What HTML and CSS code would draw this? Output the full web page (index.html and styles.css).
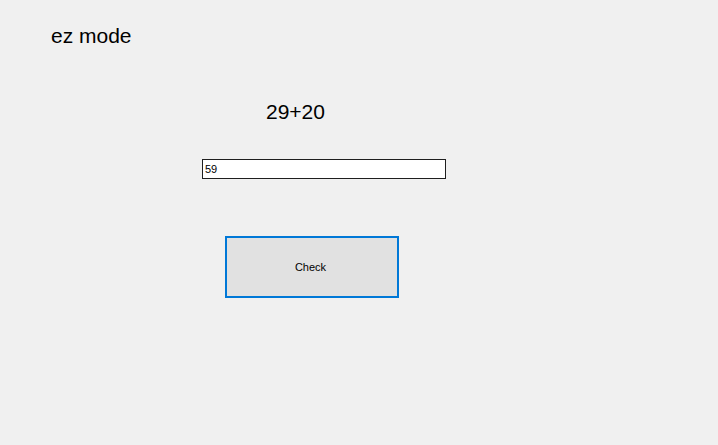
FILE: index.html
```html
<!DOCTYPE html>
<html>
<head>
<meta charset="utf-8">
<link rel="stylesheet" href="styles.css">
</head>
<body>
<div class="form">
  <div class="title">ez mode</div>
  <div class="problem">29+20</div>
  <input class="answer" type="text" value="59">
  <button class="check">Check</button>
</div>
</body>
</html>
```
FILE: styles.css
```css
html, body {
  margin: 0;
  padding: 0;
  background: #f0f0f0;
  width: 718px;
  height: 445px;
  overflow: hidden;
}
.form {
  display: flex;
  flex-direction: column;
  align-items: flex-start;
  font-family: "Liberation Sans", Arial, sans-serif;
  color: #000;
}
.title {
  margin: 24px 0 0 51px;
  font-size: 21px;
  line-height: 24px;
}
.problem {
  margin: 52px 0 0 266px;
  font-size: 21px;
  line-height: 24px;
}
.answer {
  margin: 35px 0 0 202px;
  width: 244px;
  height: 20px;
  box-sizing: border-box;
  border: 1px solid #1e1e1e;
  background: #fff;
  padding: 0 2px;
  font-family: "Liberation Sans", Arial, sans-serif;
  font-size: 11px;
  color: #000;
  outline: none;
}
.check {
  margin: 57px 0 0 225px;
  width: 174px;
  height: 62px;
  box-sizing: border-box;
  border: 2px solid #0078d7;
  background: #e1e1e1;
  font-family: "Liberation Sans", Arial, sans-serif;
  font-size: 11px;
  color: #000;
  padding: 0 3px 0 0;
  border-radius: 0;
}
```
